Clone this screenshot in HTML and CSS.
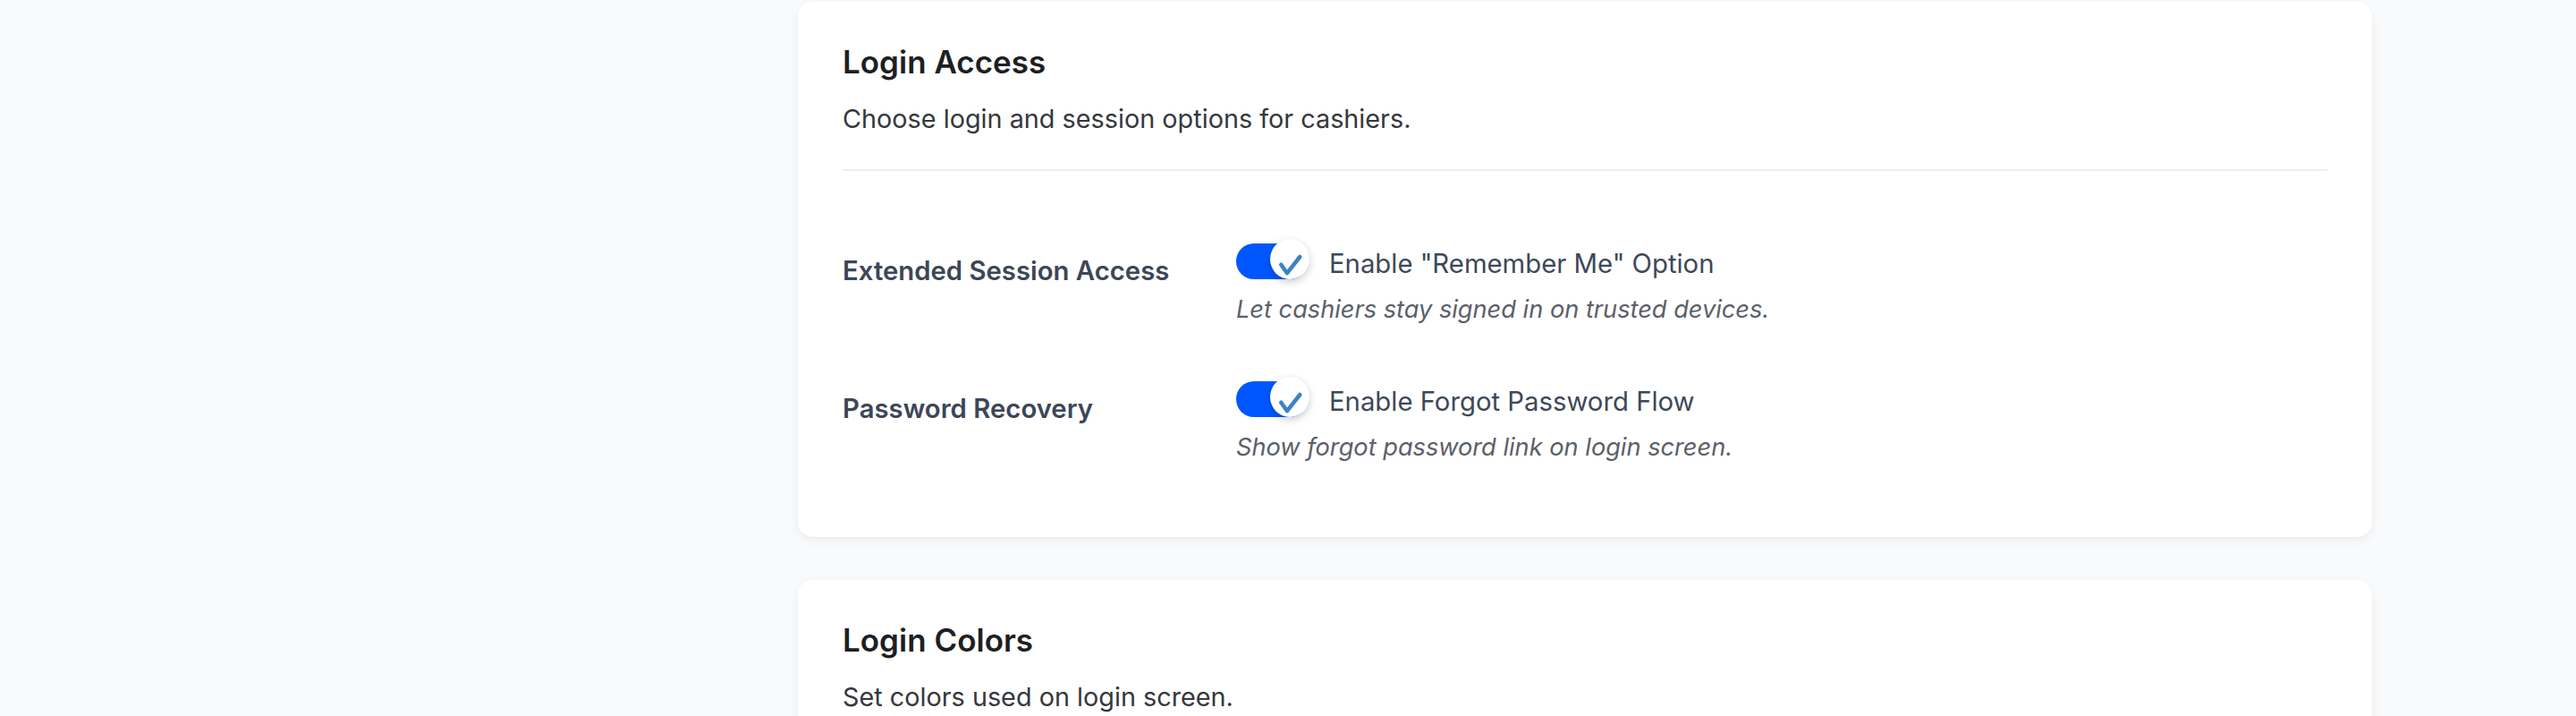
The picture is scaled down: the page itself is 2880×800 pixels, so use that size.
FILE: index.html
```html
<!DOCTYPE html>
<html lang="en">
<head>
<meta charset="utf-8">
<title>Login Settings</title>
<link rel="stylesheet" href="styles.css">
</head>
<body>
<div class="layout">
  <aside class="sidebar"></aside>
  <main class="main">
    <section class="card">
      <h2 class="card-title">Login Access</h2>
      <p class="card-desc">Choose login and session options for cashiers.</p>
      <hr class="divider">
      <div class="rows">
        <div class="row">
          <div class="row-label">Extended Session Access</div>
          <div class="row-control">
            <label class="option">
              <span class="toggle">
                <span class="knob">
                  <svg viewBox="0 0 44 44" width="44" height="44"><path d="M12.3 27.7 L19 37.2 L33.3 19" fill="none" stroke="#3b82c6" stroke-width="4.5" stroke-linecap="round" stroke-linejoin="round"/></svg>
                </span>
              </span>
              <span class="option-text">Enable "Remember Me" Option</span>
            </label>
            <div class="hint">Let cashiers stay signed in on trusted devices.</div>
          </div>
        </div>
        <div class="row">
          <div class="row-label">Password Recovery</div>
          <div class="row-control">
            <label class="option">
              <span class="toggle">
                <span class="knob">
                  <svg viewBox="0 0 44 44" width="44" height="44"><path d="M12.3 27.7 L19 37.2 L33.3 19" fill="none" stroke="#3b82c6" stroke-width="4.5" stroke-linecap="round" stroke-linejoin="round"/></svg>
                </span>
              </span>
              <span class="option-text">Enable Forgot Password Flow</span>
            </label>
            <div class="hint">Show forgot password link on login screen.</div>
          </div>
        </div>
      </div>
    </section>
    <section class="card">
      <h2 class="card-title">Login Colors</h2>
      <p class="card-desc">Set colors used on login screen.</p>
      <hr class="divider">
      <div class="rows"></div>
    </section>
  </main>
</div>
</body>
</html>
```
FILE: styles.css
```css
* { box-sizing: border-box; }
html, body { margin: 0; padding: 0; }
body {
  background: #f9fafb;
  font-family: Inter, "Noto Sans", "Liberation Sans", sans-serif;
  color: #33363b;
}
.layout {
  display: grid;
  grid-template-columns: 844px 1fr;
  min-height: 100vh;
}
.sidebar { background: #f9fafb; }
.main {
  padding: 2px 48px 48px 48px;
  display: flex;
  flex-direction: column;
  gap: 48px;
}
.card {
  width: 1760px;
  background: #ffffff;
  border-radius: 16px;
  box-shadow: 0 4px 12px rgba(15, 23, 42, 0.05), 0 1px 2px rgba(15, 23, 42, 0.03);
  padding: 46px 50px 48px 50px;
}
.card-title {
  margin: 0;
  font-size: 35px;
  line-height: 42px;
  font-weight: 600;
  color: #1d1f23;
}
.card-desc {
  margin: 22px 0 0 0;
  font-size: 28.8px;
  line-height: 42px;
  color: #35383d;
}
.divider {
  margin: 35px 0 0 0;
  border: 0;
  height: 2px;
  background: #eceef1;
}
.rows {
  padding: 81px 0 33px 0;
  display: flex;
  flex-direction: column;
  gap: 61px;
}
.row {
  display: grid;
  grid-template-columns: 440px 1fr;
}
.row-label {
  padding-top: 10px;
  font-size: 29.3px;
  line-height: 42px;
  font-weight: 600;
  color: #3c4657;
}
.row-control {
  display: flex;
  flex-direction: column;
  align-items: flex-start;
}
.option {
  display: flex;
  align-items: flex-start;
  gap: 22px;
}
.toggle {
  position: relative;
  display: block;
  width: 82px;
  height: 40px;
  flex: none;
}
.toggle::before {
  content: "";
  position: absolute;
  left: 0;
  top: 0;
  width: 80px;
  height: 40px;
  border-radius: 20px;
  background: #0057ff;
}
.knob {
  position: absolute;
  right: 0;
  top: -5px;
  width: 44px;
  height: 45px;
  border-radius: 50%;
  background: #ffffff;
  box-shadow: 0 3px 8px rgba(15, 23, 42, 0.22);
  display: flex;
  align-items: center;
  justify-content: center;
}
.knob svg { display: block; }
.option-text {
  font-size: 29.3px;
  line-height: 46px;
  color: #3d4858;
}
.hint {
  margin-top: 8px;
  font-size: 27.2px;
  line-height: 39px;
  font-style: italic;
  color: #5b6069;
}
```
